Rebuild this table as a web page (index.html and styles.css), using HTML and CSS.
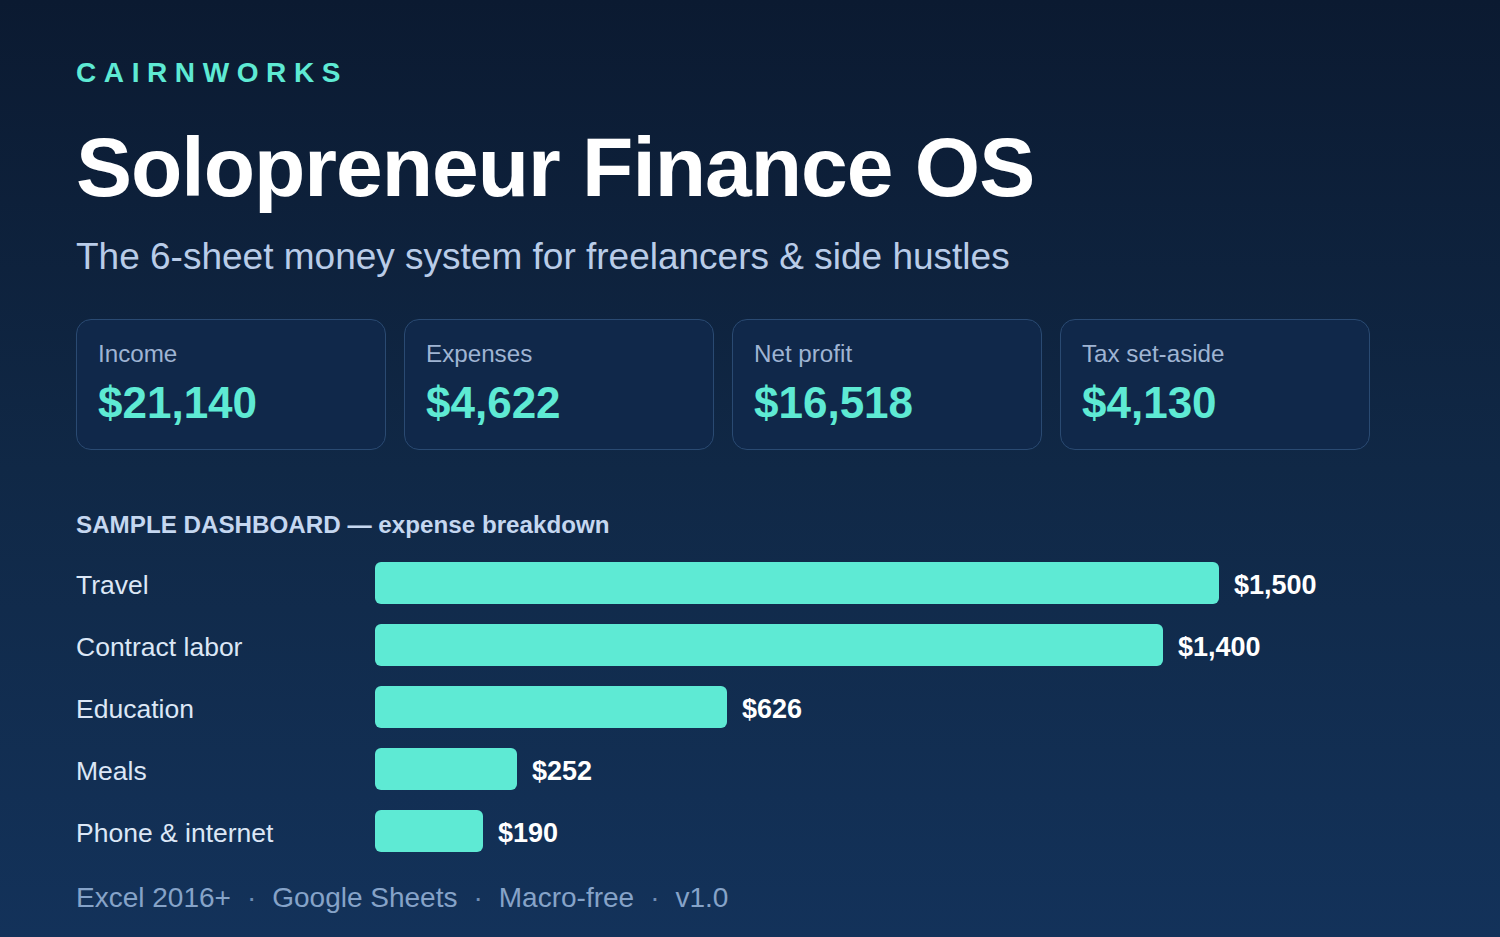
FILE: index.html
```html
<!DOCTYPE html>
<html lang="en">
<head>
<meta charset="utf-8">
<title>Solopreneur Finance OS</title>
<link rel="stylesheet" href="styles.css">
</head>
<body>
<main class="page">
  <div class="brand">CAIRNWORKS</div>
  <h1 class="title">Solopreneur Finance OS</h1>
  <p class="subtitle">The 6-sheet money system for freelancers &amp; side hustles</p>

  <section class="stats">
    <div class="card"><div class="card-label">Income</div><div class="card-value">$21,140</div></div>
    <div class="card"><div class="card-label">Expenses</div><div class="card-value">$4,622</div></div>
    <div class="card"><div class="card-label">Net profit</div><div class="card-value">$16,518</div></div>
    <div class="card"><div class="card-label">Tax set-aside</div><div class="card-value">$4,130</div></div>
  </section>

  <section class="chart">
    <h2 class="chart-title">SAMPLE DASHBOARD — expense breakdown</h2>
    <div class="rows">
      <div class="row"><span class="row-label">Travel</span><div class="track"><div class="bar" style="width:844px"></div><span class="amt">$1,500</span></div></div>
      <div class="row"><span class="row-label">Contract labor</span><div class="track"><div class="bar" style="width:788px"></div><span class="amt">$1,400</span></div></div>
      <div class="row"><span class="row-label">Education</span><div class="track"><div class="bar" style="width:352px"></div><span class="amt">$626</span></div></div>
      <div class="row"><span class="row-label">Meals</span><div class="track"><div class="bar" style="width:142px"></div><span class="amt">$252</span></div></div>
      <div class="row"><span class="row-label">Phone &amp; internet</span><div class="track"><div class="bar" style="width:108px"></div><span class="amt">$190</span></div></div>
    </div>
  </section>

  <footer class="foot">
    <span>Excel 2016+</span><span class="dot">·</span><span>Google Sheets</span><span class="dot">·</span><span>Macro-free</span><span class="dot">·</span><span>v1.0</span>
  </footer>
</main>
</body>
</html>
```

FILE: styles.css
```css
html, body {
  margin: 0;
  padding: 0;
  height: 100%;
}
body {
  background: linear-gradient(180deg, #0b1a31 0%, #102846 50%, #13325a 100%);
  font-family: "Liberation Sans", Arial, sans-serif;
  color: #ffffff;
  overflow: hidden;
}
.page {
  padding: 57px 76px 0 76px;
}
.brand {
  font-size: 28px;
  line-height: 32px;
  font-weight: 700;
  letter-spacing: 7.6px;
  color: #5eead4;
}
.title {
  margin: 32px 0 0 0;
  font-size: 84px;
  line-height: 92px;
  font-weight: 700;
  letter-spacing: -1px;
  color: #ffffff;
}
.subtitle {
  margin: 22px 0 0 0;
  font-size: 37px;
  line-height: 44px;
  font-weight: 400;
  color: #b9cce8;
}
.stats {
  display: flex;
  gap: 18px;
  margin-top: 40px;
}
.card {
  width: 310px;
  height: 131px;
  box-sizing: border-box;
  border: 1px solid #2a4a72;
  border-radius: 15px;
  background: #10284a;
  padding: 19px 21px 0 21px;
}
.card-label {
  font-size: 24.2px;
  line-height: 30px;
  color: #9fb4d3;
}
.card-value {
  margin-top: 9px;
  font-size: 44px;
  line-height: 50px;
  font-weight: 700;
  color: #5eead4;
}
.chart {
  margin-top: 60px;
}
.chart-title {
  margin: 0;
  font-size: 24.2px;
  line-height: 30px;
  font-weight: 700;
  color: #c5d7f0;
}
.rows {
  margin-top: 22px;
  display: flex;
  flex-direction: column;
  gap: 20px;
}
.row {
  display: flex;
  align-items: center;
  height: 42px;
}
.row-label {
  width: 299px;
  flex: none;
  padding-top: 4px;
  font-size: 26.5px;
  color: #dce7f6;
}
.track {
  display: flex;
  align-items: center;
  gap: 15px;
}
.bar {
  height: 42px;
  border-radius: 6px;
  background: #5eead4;
}
.amt {
  padding-top: 4px;
  font-size: 27px;
  font-weight: 700;
  color: #ffffff;
}
.foot {
  margin-top: 30px;
  display: flex;
  gap: 16px;
  font-size: 28px;
  line-height: 32px;
  color: #86a3c8;
}
.dot {
  color: #6f8db5;
}
```
